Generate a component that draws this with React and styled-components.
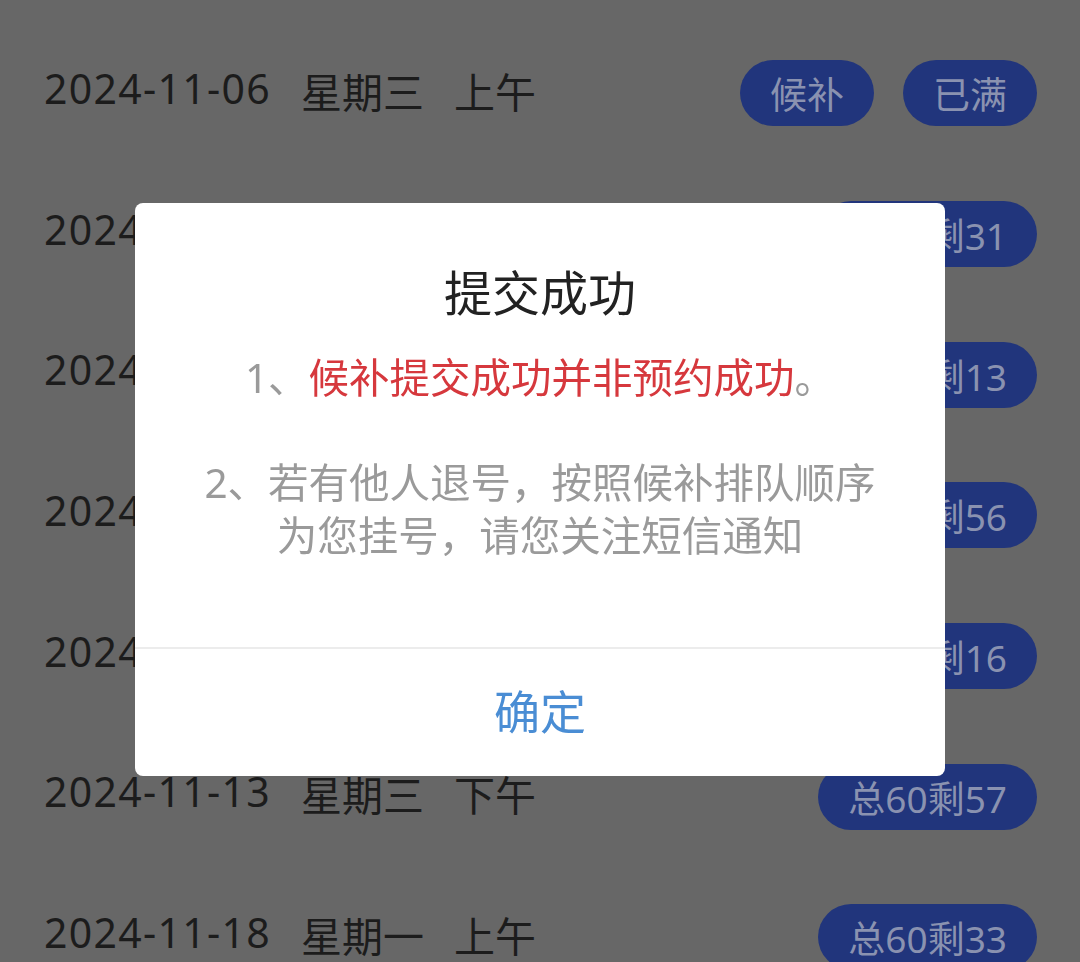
import React from "react";
import styled, { createGlobalStyle } from "styled-components";

const GlobalStyle = createGlobalStyle`
  html, body {
    margin: 0;
    padding: 0;
    background: #676767;
    font-family: "Noto Sans", "Noto Sans CJK SC", sans-serif;
  }
`;

// Schedule list (dimmed behind the dialog)
const Page = styled.div`
  width: 1080px;
  height: 962px;
  overflow: hidden;
  background: #676767;
  padding-top: 23px;
  box-sizing: border-box;
`;

const Row = styled.div`
  height: 140.7px;
  display: flex;
  align-items: center;
  justify-content: space-between;
  padding: 0 43px 0 44px;
`;

const DateInfo = styled.div`
  display: flex;
  gap: 30px;
  font-size: 41px;
  color: #1c1c1c;
  padding-bottom: 7px;
`;

const DateText = styled.span`
  letter-spacing: 1.3px;
`;

const Badges = styled.div`
  display: flex;
  gap: 29px;
`;

const Badge = styled.span`
  height: 66px;
  padding: 0 30px;
  border-radius: 33px;
  background: #21357c;
  color: #8a92b0;
  font-size: 37px;
  display: flex;
  align-items: center;
`;

// Dialog
const Overlay = styled.div`
  position: fixed;
  inset: 0;
  display: flex;
  justify-content: center;
  align-items: flex-start;
  padding-top: 203px;
`;

const Dialog = styled.div`
  width: 810px;
  background: #fff;
  border-radius: 8px;
  overflow: hidden;
`;

const Body = styled.div`
  padding: 60px 30px 85px;
  text-align: center;
`;

const Title = styled.div`
  font-size: 48px;
  line-height: 60px;
  color: #222;
`;

const Para = styled.p`
  margin: ${(p) => p.$top}px 0 0;
  font-size: 40.5px;
  line-height: 53px;
  color: #9a9a9a;
`;

const Red = styled.span`
  color: #d6383d;
`;

const Footer = styled.div`
  border-top: 2px solid #ececec;
  height: 129px;
  display: flex;
  align-items: center;
  justify-content: center;
  font-size: 46px;
  color: #4a8dd4;
  padding-bottom: 8px;
  box-sizing: border-box;
`;

const rows = [
  { date: "2024-11-06", week: "星期三", half: "上午", badges: ["候补", "已满"] },
  { date: "2024-11-06", week: "星期三", half: "下午", badges: ["总60剩31"] },
  { date: "2024-11-08", week: "星期五", half: "上午", badges: ["总60剩13"] },
  { date: "2024-11-08", week: "星期五", half: "下午", badges: ["总60剩56"] },
  { date: "2024-11-13", week: "星期三", half: "上午", badges: ["总60剩16"] },
  { date: "2024-11-13", week: "星期三", half: "下午", badges: ["总60剩57"] },
  { date: "2024-11-18", week: "星期一", half: "上午", badges: ["总60剩33"] },
];

export default function App() {
  return (
    <>
      <GlobalStyle />
      <Page>
        {rows.map((r, i) => (
          <Row key={i}>
            <DateInfo>
              <DateText>{r.date}</DateText>
              <span>{r.week}</span>
              <span>{r.half}</span>
            </DateInfo>
            <Badges>
              {r.badges.map((b) => (
                <Badge key={b}>{b}</Badge>
              ))}
            </Badges>
          </Row>
        ))}
      </Page>

      <Overlay>
        <Dialog>
          <Body>
            <Title>提交成功</Title>
            <Para $top={28}>
              1、<Red>候补提交成功并非预约成功</Red>。
            </Para>
            <Para $top={52}>
              2、若有他人退号，按照候补排队顺序
              <br />
              为您挂号，请您关注短信通知
            </Para>
          </Body>
          <Footer>确定</Footer>
        </Dialog>
      </Overlay>
    </>
  );
}
